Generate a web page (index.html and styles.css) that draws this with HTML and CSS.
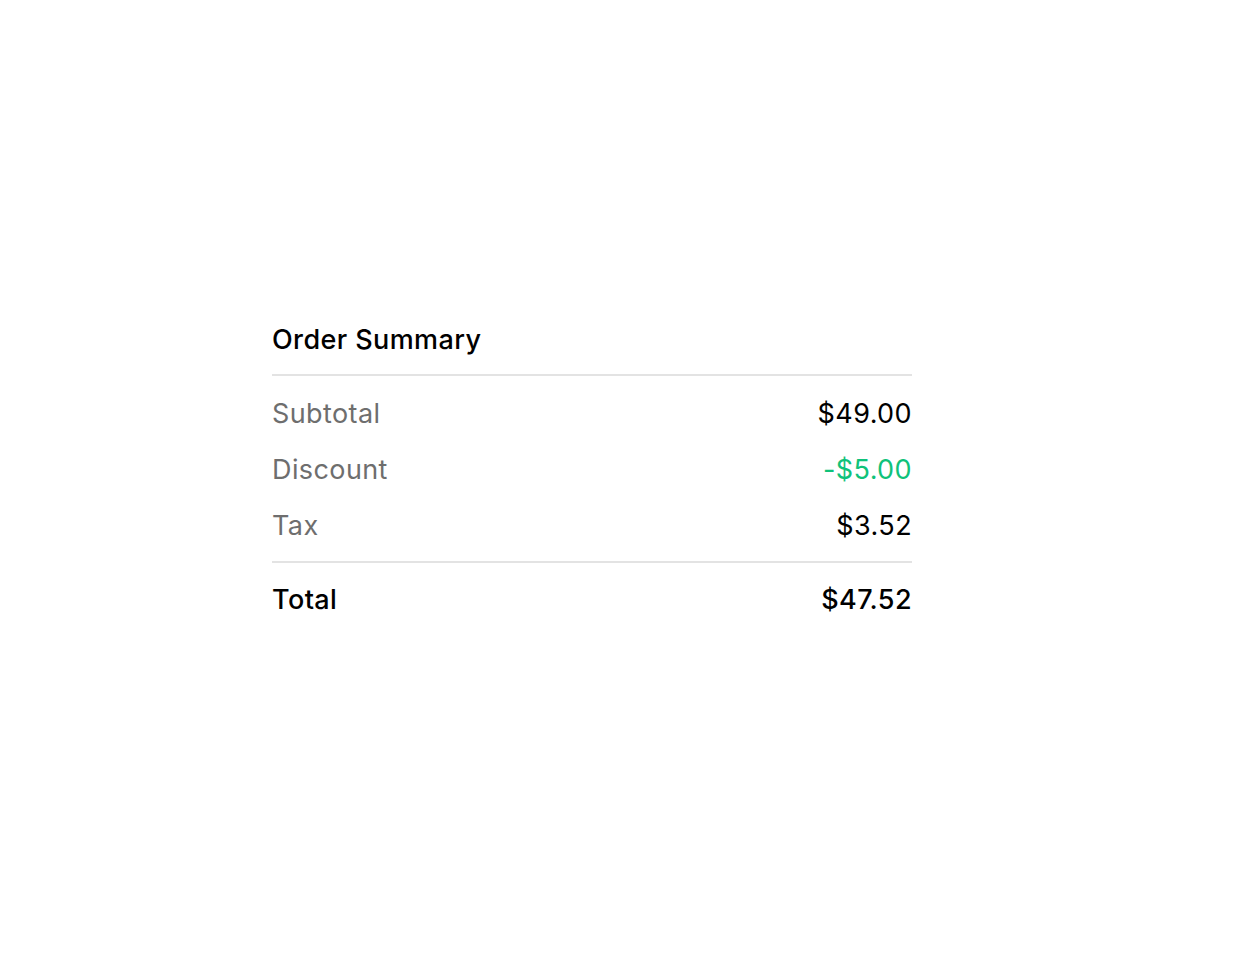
FILE: index.html
```html
<!DOCTYPE html>
<html lang="en">
<head>
<meta charset="utf-8">
<title>Order Summary</title>
<link rel="stylesheet" href="styles.css">
</head>
<body>
<main class="page">
  <section class="summary">
    <h2 class="summary-title">Order Summary</h2>
    <div class="summary-lines">
      <div class="row"><span class="label">Subtotal</span><span class="value">$49.00</span></div>
      <div class="row"><span class="label">Discount</span><span class="value discount">-$5.00</span></div>
      <div class="row"><span class="label">Tax</span><span class="value">$3.52</span></div>
    </div>
    <div class="row total"><span class="label">Total</span><span class="value">$47.52</span></div>
  </section>
</main>
</body>
</html>
```

FILE: styles.css
```css
html, body {
  margin: 0;
  padding: 0;
  background: #ffffff;
}
body {
  font-family: Inter, "Noto Sans", "Liberation Sans", sans-serif;
  color: #000000;
  letter-spacing: 0.4px;
}
.page {
  padding: 324px 0 0 272px;
}
.summary {
  width: 640px;
}
.summary-title {
  margin: 0;
  font-size: 27px;
  font-weight: 500;
  line-height: 32px;
  padding-bottom: 18px;
  border-bottom: 2px solid #e3e3e3;
}
.summary-lines {
  padding: 10px 0 7px;
  border-bottom: 2px solid #e3e3e3;
}
.row {
  display: flex;
  justify-content: space-between;
  align-items: center;
  padding: 12px 0;
  font-size: 27px;
  line-height: 32px;
}
.label {
  color: #6e6e6e;
}
.value {
  color: #000000;
}
.value.discount {
  color: #0fc27a;
}
.row.total {
  padding-top: 21px;
  font-weight: 500;
}
.row.total .label {
  color: #000000;
}
```
